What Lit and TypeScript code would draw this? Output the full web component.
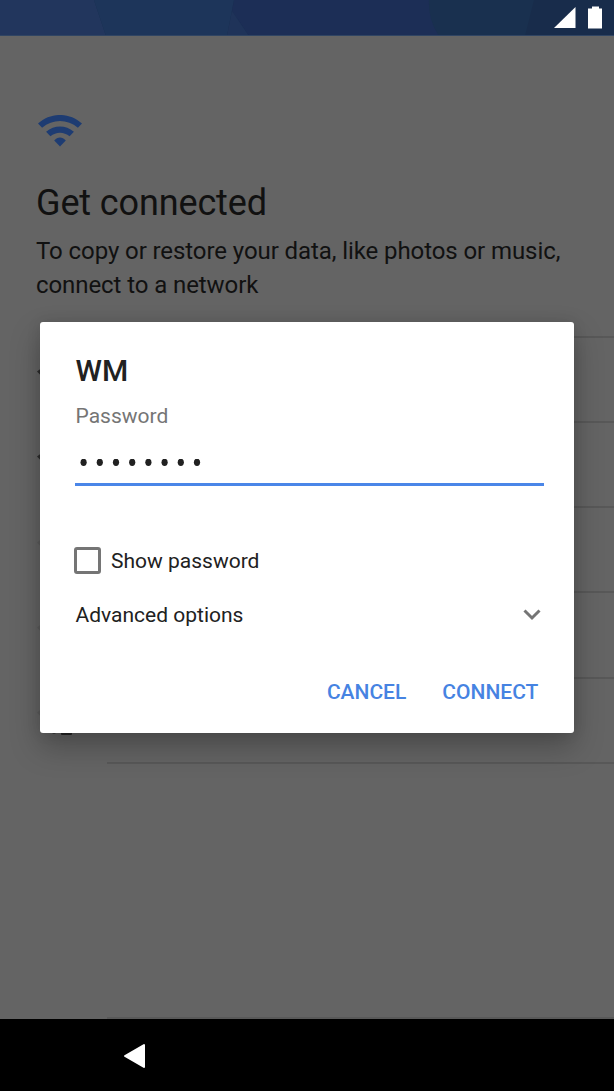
import { LitElement, html, css, svg } from "lit";
import { customElement } from "lit/decorators.js";

const wifi = svg`<path d="M0 8.6C12.5 -2.9 31.500 -2.900 44 8.600L39.900 12.800C29.500 3.700 14.500 3.700 4.100 12.800Z"/><path d="M8.100 16.800C16.300 9.600 27.700 9.600 35.900 16.800L31.600 21.300C26 16.600 18 16.600 12.400 21.300Z"/><path d="M16.200 25.400C19.600 21.400 24.400 21.400 27.800 25.400L22 31.500Z"/>`;

@customElement("app-root")
export class AppRoot extends LitElement {
  static styles = css`
    :host {
      display: grid;
      grid-template-rows: 36px 983px 72px;
      width: 614px;
      height: 1091px;
      overflow: hidden;
      position: relative;
      background: #646464;
      font-family: Roboto, "Liberation Sans", sans-serif;
      color: #212121;
    }
    svg { display: block; }
    .status svg { width: 614px; height: 36px; }
    .setup { padding: 78.500px 0 0; overflow: hidden; display: flex; flex-direction: column; box-sizing: border-box; }
    .hero { width: 44px; height: 32px; margin-left: 37.500px; fill: #1e3c72; flex: none; }
    h1 { margin: 34px 0 0 36px; font-size: 36px; line-height: 44px; font-weight: 400; color: #111; white-space: nowrap; letter-spacing: -0.130px; }
    .intro { margin: 9.500px 0 0 36px; font-size: 24px; line-height: 34px; color: #111; white-space: nowrap; letter-spacing: -0.085px; }
    .networks { margin-top: 33.500px; flex: none; }
    .network { height: 85.3px; box-sizing: border-box; display: grid; grid-template-columns: 107px 1fr; }
    .network .line { border-top: 2px solid #585858; }
    .network .glyph { padding: 28.500px 0 0 37px; }
    .network .glyph svg { width: 36px; height: 27px; fill: #2c2c2c; }
    .faint .glyph svg { fill: #5b5b5b; }
    .add { height: 255.500px; }
    .end { margin-left: 107px; border-top: 2px solid #595959; }
    .locked { position: relative; }
    .lock { position: absolute; left: 61px; top: 50px; width: 11px; height: 8px; background: #252525; border-radius: 1px; }
    .tip { position: absolute; left: 52px; top: 53px; width: 4px; height: 4px; background: #3a3a3a; border-radius: 2px; }
    .nav { background: #000; padding: 23.500px 0 0 123px; }
    .nav svg { width: 23px; height: 26px; }
    .dialog {
      position: absolute;
      left: 39.500px;
      top: 322px;
      width: 534.900px;
      height: 411px;
      box-sizing: border-box;
      padding: 30.500px 30px 0 36px;
      background: #fff;
      border-radius: 3px;
      box-shadow: 0 14px 30px rgba(0, 0, 0, 0.26), 0 0 14px rgba(0, 0, 0, 0.1);
      display: flex;
      flex-direction: column;
    }
    h2 { margin: 0; font-size: 30px; line-height: 36px; font-weight: 500; }
    .label { margin-top: 14.500px; font-size: 21px; line-height: 26px; color: #757575; }
    .field { height: 57px; box-sizing: border-box; padding: 30px 0 0; margin-left: -0.500px; border-bottom: 3px solid #4a86e8; }
    .field svg { width: 140px; height: 10px; fill: #212121; }
    .check { margin-top: 60px; margin-left: -2px; height: 28px; display: flex; align-items: center; gap: 10.500px; font-size: 21px; }
    .check span:last-child { padding-top: 2px; }
    .box { width: 27px; height: 27px; box-sizing: border-box; border: 3px solid #757575; border-radius: 3px; }
    .advanced { margin-top: 27px; height: 28px; display: flex; align-items: center; justify-content: space-between; font-size: 21px; }
    .advanced svg { width: 18px; height: 12px; margin-right: 3px; }
    .actions { margin-top: 49px; display: flex; justify-content: flex-end; gap: 36px; padding-right: 6px; font-size: 21px; line-height: 28px; font-weight: 500; color: #4683e2; }
  `;

  network(faint: boolean) {
    return html`<div class="network ${faint ? "faint" : ""}">
      <div class="glyph"><svg viewBox="0 0 44 32">${wifi}</svg></div>
      <div class="line"></div>
    </div>`;
  }

  render() {
    return html`
      <header class="status">
        <svg viewBox="0 0 614 36">
          <rect width="614" height="36" fill="#19304f" />
          <path d="M0 0H94L106 36H0Z" fill="#22365d" />
          <path d="M94 0H234L227 36H106Z" fill="#1d355a" />
          <path d="M234 0H429Q428 20 439 36H249L232 11Z" fill="#1c2e56" />
          <path d="M232 11L249 36H227Z" fill="#1f3359" />
          <path d="M534 0H614V36H525Z" fill="#182c4b" />
          <rect y="35" width="614" height="1" fill="#304563" />
          <path d="M554 28L575.500 7V28Z" fill="#fff" />
          <path d="M592 6.500H599V8.500H602V28.500H588V8.500H592Z" fill="#fff" />
        </svg>
      </header>
      <main class="setup">
        <svg class="hero" viewBox="0 0 44 32">${wifi}</svg>
        <h1>Get connected</h1>
        <div class="intro">To copy or restore your data, like photos or music,<br />connect to a network</div>
        <div class="networks">
          ${[false, false, true, true].map((f) => this.network(f))}
          <div class="locked">${this.network(true)}<span class="tip"></span><span class="lock"></span></div>
          <div class="network add"><div></div><div class="line"></div></div>
          <div class="end"></div>
        </div>
      </main>
      <nav class="nav">
        <svg viewBox="0 0 23 26"><path d="M2 13L21 2V24Z" fill="#fff" stroke="#fff" stroke-width="2" stroke-linejoin="round" /></svg>
      </nav>
      <section class="dialog">
        <h2>WM</h2>
        <div class="label">Password</div>
        <div class="field">
          <svg viewBox="0 0 140 10">${Array.from({ length: 8 }, (_, i) => svg`<ellipse cx=${8.6 + i * 16.2} cy="3.300" rx="3.100" ry="3.600" />`)}</svg>
        </div>
        <div class="check"><span class="box"></span><span>Show password</span></div>
        <div class="advanced"><span>Advanced options</span>
          <svg viewBox="0 0 18 12"><path d="M1.500 1.500L9 9L16.500 1.500" fill="none" stroke="#757575" stroke-width="3" /></svg>
        </div>
        <div class="actions"><span>CANCEL</span><span>CONNECT</span></div>
      </section>
    `;
  }
}
